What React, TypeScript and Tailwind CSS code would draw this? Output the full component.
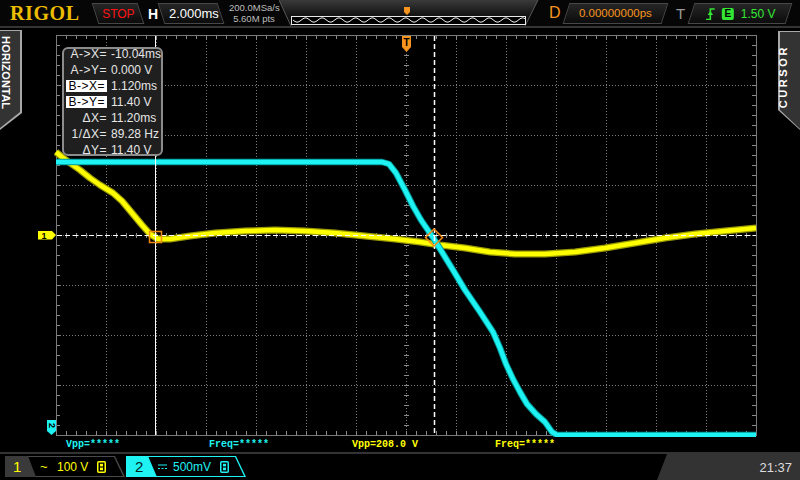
import React from 'react';

const range = (a: number, b: number, step: number): number[] => {
  const out: number[] = [];
  for (let v = a; v <= b; v += step) out.push(v);
  return out;
};

const pts = (p: number[][]): string => p.map(([x, y]) => `${x},${y}`).join(' ');

// trace points in screen coordinates
const CH1 = pts([
  [56, 152], [62, 157], [70, 163], [80, 170], [90, 178], [100, 185], [113, 193], [122, 201],
  [132, 213], [142, 225], [150, 234], [158, 239], [170, 239], [190, 236], [215, 233], [245, 231],
  [275, 230], [305, 231], [335, 233], [365, 236], [395, 239], [420, 242], [440, 245], [465, 248],
  [490, 252], [515, 254], [545, 254], [575, 252], [605, 248], [635, 243], [665, 238], [695, 234],
  [725, 231], [756, 228],
]);

const CH2 = pts([
  [56, 162], [150, 162], [250, 162], [300, 162], [382, 162], [389, 164], [396, 173], [405, 190],
  [413, 206], [421, 220], [434, 239], [445, 257], [453, 270], [465, 290], [480, 312], [493, 332],
  [500, 348], [506, 364], [513, 379], [520, 392], [527, 404], [536, 414], [545, 422], [552, 432],
  [557, 435], [756, 435],
]);

const wave = range(0, 232, 2)
  .map((i) => `${14 + i},${20 + 2.2 * Math.sin((i / 16.7) * Math.PI * 2)}`)
  .join(' ');

const Screen = (): React.JSX.Element => (
  <svg width={756} height={409} viewBox="22 28 756 409" className="block">
    {/* dotted grid */}
    {range(106, 706, 50).map((x) => (
      <line key={`v${x}`} x1={x + 0.5} y1={36} x2={x + 0.5} y2={435} stroke="#7c7c7c" strokeDasharray="1 2" />
    ))}
    {range(85, 385, 50).map((y) => (
      <line key={`h${y}`} x1={57} y1={y + 0.5} x2={756} y2={y + 0.5} stroke="#7c7c7c" strokeDasharray="1 2" />
    ))}
    {/* center axis ticks */}
    {range(45, 425, 10).map((y) => (
      <line key={`cy${y}`} x1={404} y1={y + 0.5} x2={409} y2={y + 0.5} stroke="#8a8a8a" />
    ))}
    {range(66, 746, 10).map((x) => (
      <line key={`cx${x}`} x1={x + 0.5} y1={233} x2={x + 0.5} y2={238} stroke="#8a8a8a" />
    ))}
    {/* edge ticks */}
    {range(66, 746, 10).map((x) => (
      <g key={`t${x}`} stroke="#8a8a8a">
        <line x1={x + 0.5} y1={35} x2={x + 0.5} y2={39} />
        <line x1={x + 0.5} y1={431} x2={x + 0.5} y2={435} />
      </g>
    ))}
    {range(45, 425, 10).map((y) => (
      <g key={`s${y}`} stroke="#8a8a8a">
        <line x1={56} y1={y + 0.5} x2={60} y2={y + 0.5} />
        <line x1={752} y1={y + 0.5} x2={756} y2={y + 0.5} />
      </g>
    ))}
    <rect x={56.5} y={35.5} width={700} height={400} fill="none" stroke="#7a7a7a" />

    {/* traces */}
    <polyline points={CH1} fill="none" stroke="#9c9c00" strokeWidth={7} strokeLinejoin="round" />
    <polyline points={CH1} fill="none" stroke="#ffff00" strokeWidth={4.5} strokeLinejoin="round" />
    <polyline points={CH2} fill="none" stroke="#009a9a" strokeWidth={6.5} strokeLinejoin="round" />
    <polyline points={CH2} fill="none" stroke="#1ff2f2" strokeWidth={4.5} strokeLinejoin="round" />

    {/* cursors */}
    <line x1={155.5} y1={36} x2={155.5} y2={435} stroke="#ffffff" />
    <line x1={434.5} y1={36} x2={434.5} y2={435} stroke="#ffffff" strokeWidth={1.5} strokeDasharray="5 3" />
    <line x1={57} y1={235.5} x2={756} y2={235.5} stroke="#ffffff" strokeWidth={1.2} strokeDasharray="5 3" />
    <rect x={149.5} y={231.5} width={12} height={11} fill="none" stroke="#f08a10" strokeWidth={1.5} />
    <polygon points="434,229 442.5,237.5 434,246 425.5,237.5" fill="none" stroke="#f08a10" strokeWidth={1.5} />

    {/* trigger position marker */}
    <polygon points="402,36 411,36 411,47 406.5,52 402,47" fill="#f7941d" />
    <text x={406.5} y={45.5} textAnchor="middle" fontSize={10} fontWeight={700} fill="#000" fontFamily="Liberation Sans, sans-serif">T</text>

    {/* channel markers */}
    <polygon points="38,231 52,231 56,235 52,239.5 38,239.5" fill="#ffff00" />
    <text x={44} y={238.5} textAnchor="middle" fontSize={9} fontWeight={700} fill="#000" fontFamily="Liberation Sans, sans-serif">1</text>
    <polygon points="47,420 56,420 56,431 51.5,435 47,431" fill="#1ff2f2" />
    <text x={0} y={0} transform="translate(48.5 425.5) rotate(90)" textAnchor="middle" fontSize={9} fontWeight={700} fill="#000" fontFamily="Liberation Sans, sans-serif">2</text>
  </svg>
);

const SlantBox = ({ className, back, children }: { className: string; back?: boolean; children: React.ReactNode }): React.JSX.Element => (
  <div
    className={`mt-[3px] flex h-[21px] shrink-0 items-center justify-center border border-[#474747] bg-linear-to-b from-[#262626] to-[#0c0c0c] ${
      back ? '-skew-x-[18deg]' : 'skew-x-[18deg]'
    } ${className}`}
  >
    <div className={`flex items-center ${back ? 'skew-x-[18deg]' : '-skew-x-[18deg]'}`}>{children}</div>
  </div>
);

const BwIcon = ({ color }: { color: string }): React.JSX.Element => (
  <svg width={9} height={12} viewBox="0 0 9 12">
    <rect x={0.75} y={0.75} width={7.5} height={10.5} rx={1} fill="none" stroke={color} strokeWidth={1.5} />
    <rect x={3} y={2.8} width={3} height={2.6} fill={color} />
    <rect x={3} y={6.6} width={3} height={2.6} fill={color} />
  </svg>
);

const TopBar = (): React.JSX.Element => (
  <div className="flex h-[28px] shrink-0 items-start border-b-2 border-[#343434] bg-[#060606]">
    <div className="w-[95px] shrink-0 pl-[10px] pt-[2px] font-['Liberation_Serif',serif] text-[20px] font-bold leading-[22px] tracking-[0.6px] text-[#ecbc00]">
      RIGOL
    </div>
    <SlantBox className="w-[46px]">
      <span className="text-[12px] leading-none text-[#ff1414]">STOP</span>
    </SlantBox>
    <div className="ml-[7px] mt-[7px] w-[11px] shrink-0 text-[14px] font-bold leading-none text-white">H</div>
    <SlantBox className="ml-[2px] w-[60px]">
      <span className="pl-[6px] text-[13px] leading-none text-white">2.000ms</span>
    </SlantBox>
    <div className="ml-[8px] w-[50px] shrink-0 pt-[2px] text-center text-[9.5px] leading-[11px] text-[#bdbdbd]">
      <div>200.0MSa/s</div>
      <div>5.60M pts</div>
    </div>
    <svg width={260} height={26} viewBox="0 0 260 26" className="block shrink-0">
      <defs>
        <linearGradient id="mem" x1="0" y1="0" x2="0" y2="1">
          <stop offset="0" stopColor="#3a3a3a" />
          <stop offset="0.55" stopColor="#151515" />
          <stop offset="1" stopColor="#0a0a0a" />
        </linearGradient>
      </defs>
      <polygon points="0,0 12,26 246,26 259,0" fill="url(#mem)" />
      <polyline points="0,0 12,26" fill="none" stroke="#5a5a5a" />
      <polyline points="259,0 246,26" fill="none" stroke="#5a5a5a" />
      <rect x={12.5} y={16.5} width={234} height={8} fill="#000" stroke="#e8e8e8" />
      <polyline points={wave} fill="none" stroke="#f0f0f0" strokeWidth={1} />
      <polygon points="125,7 131,7 131,12 128,15 125,12" fill="#f7941d" />
    </svg>
    <div className="ml-[10px] mt-[5px] w-[12px] shrink-0 text-[16px] leading-none text-[#f7941d]">D</div>
    <SlantBox back className="ml-[5px] w-[99px]">
      <span className="text-[11.5px] leading-none text-[#f7941d]">0.00000000ps</span>
    </SlantBox>
    <div className="ml-[11px] mt-[6px] w-[10px] shrink-0 text-[15px] leading-none text-[#9a9a9a]">T</div>
    <SlantBox back className="ml-[5px] w-[98px]">
      <div className="flex items-center gap-[7px] pl-[2px]">
        <svg width={9} height={12} viewBox="0 0 9 12">
          <path d="M0 11.5 H4.5 V1 H9" fill="none" stroke="#33e633" strokeWidth={1.6} />
          <polygon points="4.5,3 1.8,7 7.2,7" fill="#33e633" />
        </svg>
        <div className="flex h-[12px] w-[12px] items-center justify-center rounded-[2px] bg-[#33e633] text-[10px] font-bold leading-none text-black">
          E
        </div>
        <span className="text-[12px] leading-none text-[#33e633]">1.50 V</span>
      </div>
    </SlantBox>
  </div>
);

const Row = ({ label, value, hl }: { label: string; value: string; hl?: boolean }): React.JSX.Element => (
  <div className="flex h-[16px] items-center whitespace-nowrap text-[12px] leading-none">
    <div className="flex w-[43px] justify-end">
      <span className={hl ? 'flex h-[12px] items-center bg-white px-[2px] tracking-[0.5px] text-black' : 'tracking-[0.5px] text-[#e6e6e6]'}>{label}</span>
    </div>
    <span className="ml-[4px] text-[#e6e6e6]">{value}</span>
  </div>
);

const CursorBox = (): React.JSX.Element => (
  <div className="absolute left-[40px] top-[19px] h-[109px] w-[101px] overflow-hidden rounded-[6px] border-2 border-[#8c8c8c] bg-[#1f1f1f]">
    <div className="-mt-[3px]">
      <Row label="A->X=" value="-10.04ms" />
      <Row label="A->Y=" value="0.000 V" />
      <Row label="B->X=" value="1.120ms" hl />
      <Row label="B->Y=" value="11.40 V" hl />
      <Row label="ΔX=" value="11.20ms" />
      <Row label="1/ΔX=" value="89.28 Hz" />
      <Row label="ΔY=" value="11.40 V" />
    </div>
  </div>
);

const Measurements = (): React.JSX.Element => (
  <div className="flex h-[15px] items-center pl-[44px] font-['Liberation_Mono',monospace] text-[10px] font-bold leading-none">
    <span className="w-[143px] text-[#1ff2f2]">Vpp=*****</span>
    <span className="w-[143px] text-[#1ff2f2]">Freq=*****</span>
    <span className="w-[143px] text-[#ffff00]">Vpp=208.0 V</span>
    <span className="w-[143px] text-[#ffff00]">Freq=*****</span>
  </div>
);

const Middle = (): React.JSX.Element => (
  <div className="flex h-[424px] shrink-0">
    {/* left menu tab */}
    <div className="w-[22px]">
      <div className="relative mt-[2px] h-[100px] w-[22px] bg-[#a8a8a8] [clip-path:polygon(0_0,100%_0,100%_83px,0_100%)]">
        <div className="absolute left-0 top-[1px] h-[97px] w-[20px] bg-[#333] [clip-path:polygon(0_0,100%_0,100%_81px,0_100%)]" />
        <div className="relative flex justify-center pt-[6px] text-[11px] font-bold leading-none tracking-[0.2px] text-white [writing-mode:vertical-rl]">
          HORIZONTAL
        </div>
      </div>
    </div>

    <div className="relative w-[756px]">
      <Screen />
      <Measurements />
      <CursorBox />
    </div>

    {/* right menu tab */}
    <div className="w-[22px]">
      <div className="relative mt-[3px] h-[99px] w-[22px] bg-[#a8a8a8] [clip-path:polygon(0_0,100%_0,100%_100%,0_79px)]">
        <div className="absolute right-0 top-[1px] h-[97px] w-[20px] bg-[#333] [clip-path:polygon(0_0,100%_0,100%_100%,0_78px)]" />
        <div className="relative flex rotate-180 justify-center pb-[14px] text-[11px] font-bold leading-none tracking-[2.6px] text-white [writing-mode:vertical-rl]">
          CURSOR
        </div>
      </div>
    </div>
  </div>
);

const BottomBar = (): React.JSX.Element => (
  <div className="flex h-[28px] shrink-0 items-start border-t-2 border-[#333] bg-black">
    {/* channel 1 */}
    <div className="relative ml-[5px] mt-[2px] h-[21px] w-[120px] bg-[#4a4a4a] [clip-path:polygon(0_0,110px_0,120px_100%,0_100%)]">
      <div className="absolute left-[1px] top-[1px] h-[19px] w-[118px] bg-black [clip-path:polygon(0_0,108px_0,117px_100%,0_100%)]" />
      <div className="absolute left-0 top-0 h-[21px] w-[31px] bg-[#3a3a3a] [clip-path:polygon(0_0,23px_0,31px_100%,0_100%)]" />
      <div className="relative flex h-full items-center text-[12px] leading-none text-[#ffff00]">
        <span className="ml-[8px] w-[27px] text-[15px]">1</span>
        <span className="w-[17px] text-[13px]">~</span>
        <span className="w-[40px]">100 V</span>
        <BwIcon color="#ffff00" />
      </div>
    </div>
    {/* channel 2 */}
    <div className="relative ml-[1px] mt-[2px] h-[21px] w-[120px] bg-[#1ff2f2] [clip-path:polygon(0_0,110px_0,120px_100%,0_100%)]">
      <div className="absolute left-[1px] top-[1px] h-[19px] w-[118px] bg-black [clip-path:polygon(0_0,108px_0,117px_100%,0_100%)]" />
      <div className="absolute left-0 top-0 h-[21px] w-[31px] bg-[#1ff2f2] [clip-path:polygon(0_0,22px_0,31px_100%,0_100%)]" />
      <div className="relative flex h-full items-center text-[12px] leading-none text-[#1ff2f2]">
        <span className="ml-[9px] w-[23px] text-[15px] text-[#042020]">2</span>
        <svg width={9} height={6} viewBox="0 0 9 6" className="mr-[6px]">
          <line x1={0} y1={1} x2={9} y2={1} stroke="#1ff2f2" strokeWidth={1.2} />
          <line x1={0} y1={4.5} x2={9} y2={4.5} stroke="#1ff2f2" strokeWidth={1.2} strokeDasharray="2 1.5" />
        </svg>
        <span className="w-[47px]">500mV</span>
        <BwIcon color="#1ff2f2" />
      </div>
    </div>
    {/* clock */}
    <div className="ml-auto flex h-[26px] w-[143px] items-center justify-end bg-[#333] pr-[8px] text-[13px] leading-none text-[#dcdcdc] [clip-path:polygon(10px_0,100%_0,100%_100%,0_100%)]">
      21:37
    </div>
  </div>
);

export default function App(): React.JSX.Element {
  return (
    <div className="flex h-[480px] w-[800px] flex-col overflow-hidden bg-black font-['Liberation_Sans',Arial,sans-serif] text-white">
      <TopBar />
      <Middle />
      <BottomBar />
    </div>
  );
}
